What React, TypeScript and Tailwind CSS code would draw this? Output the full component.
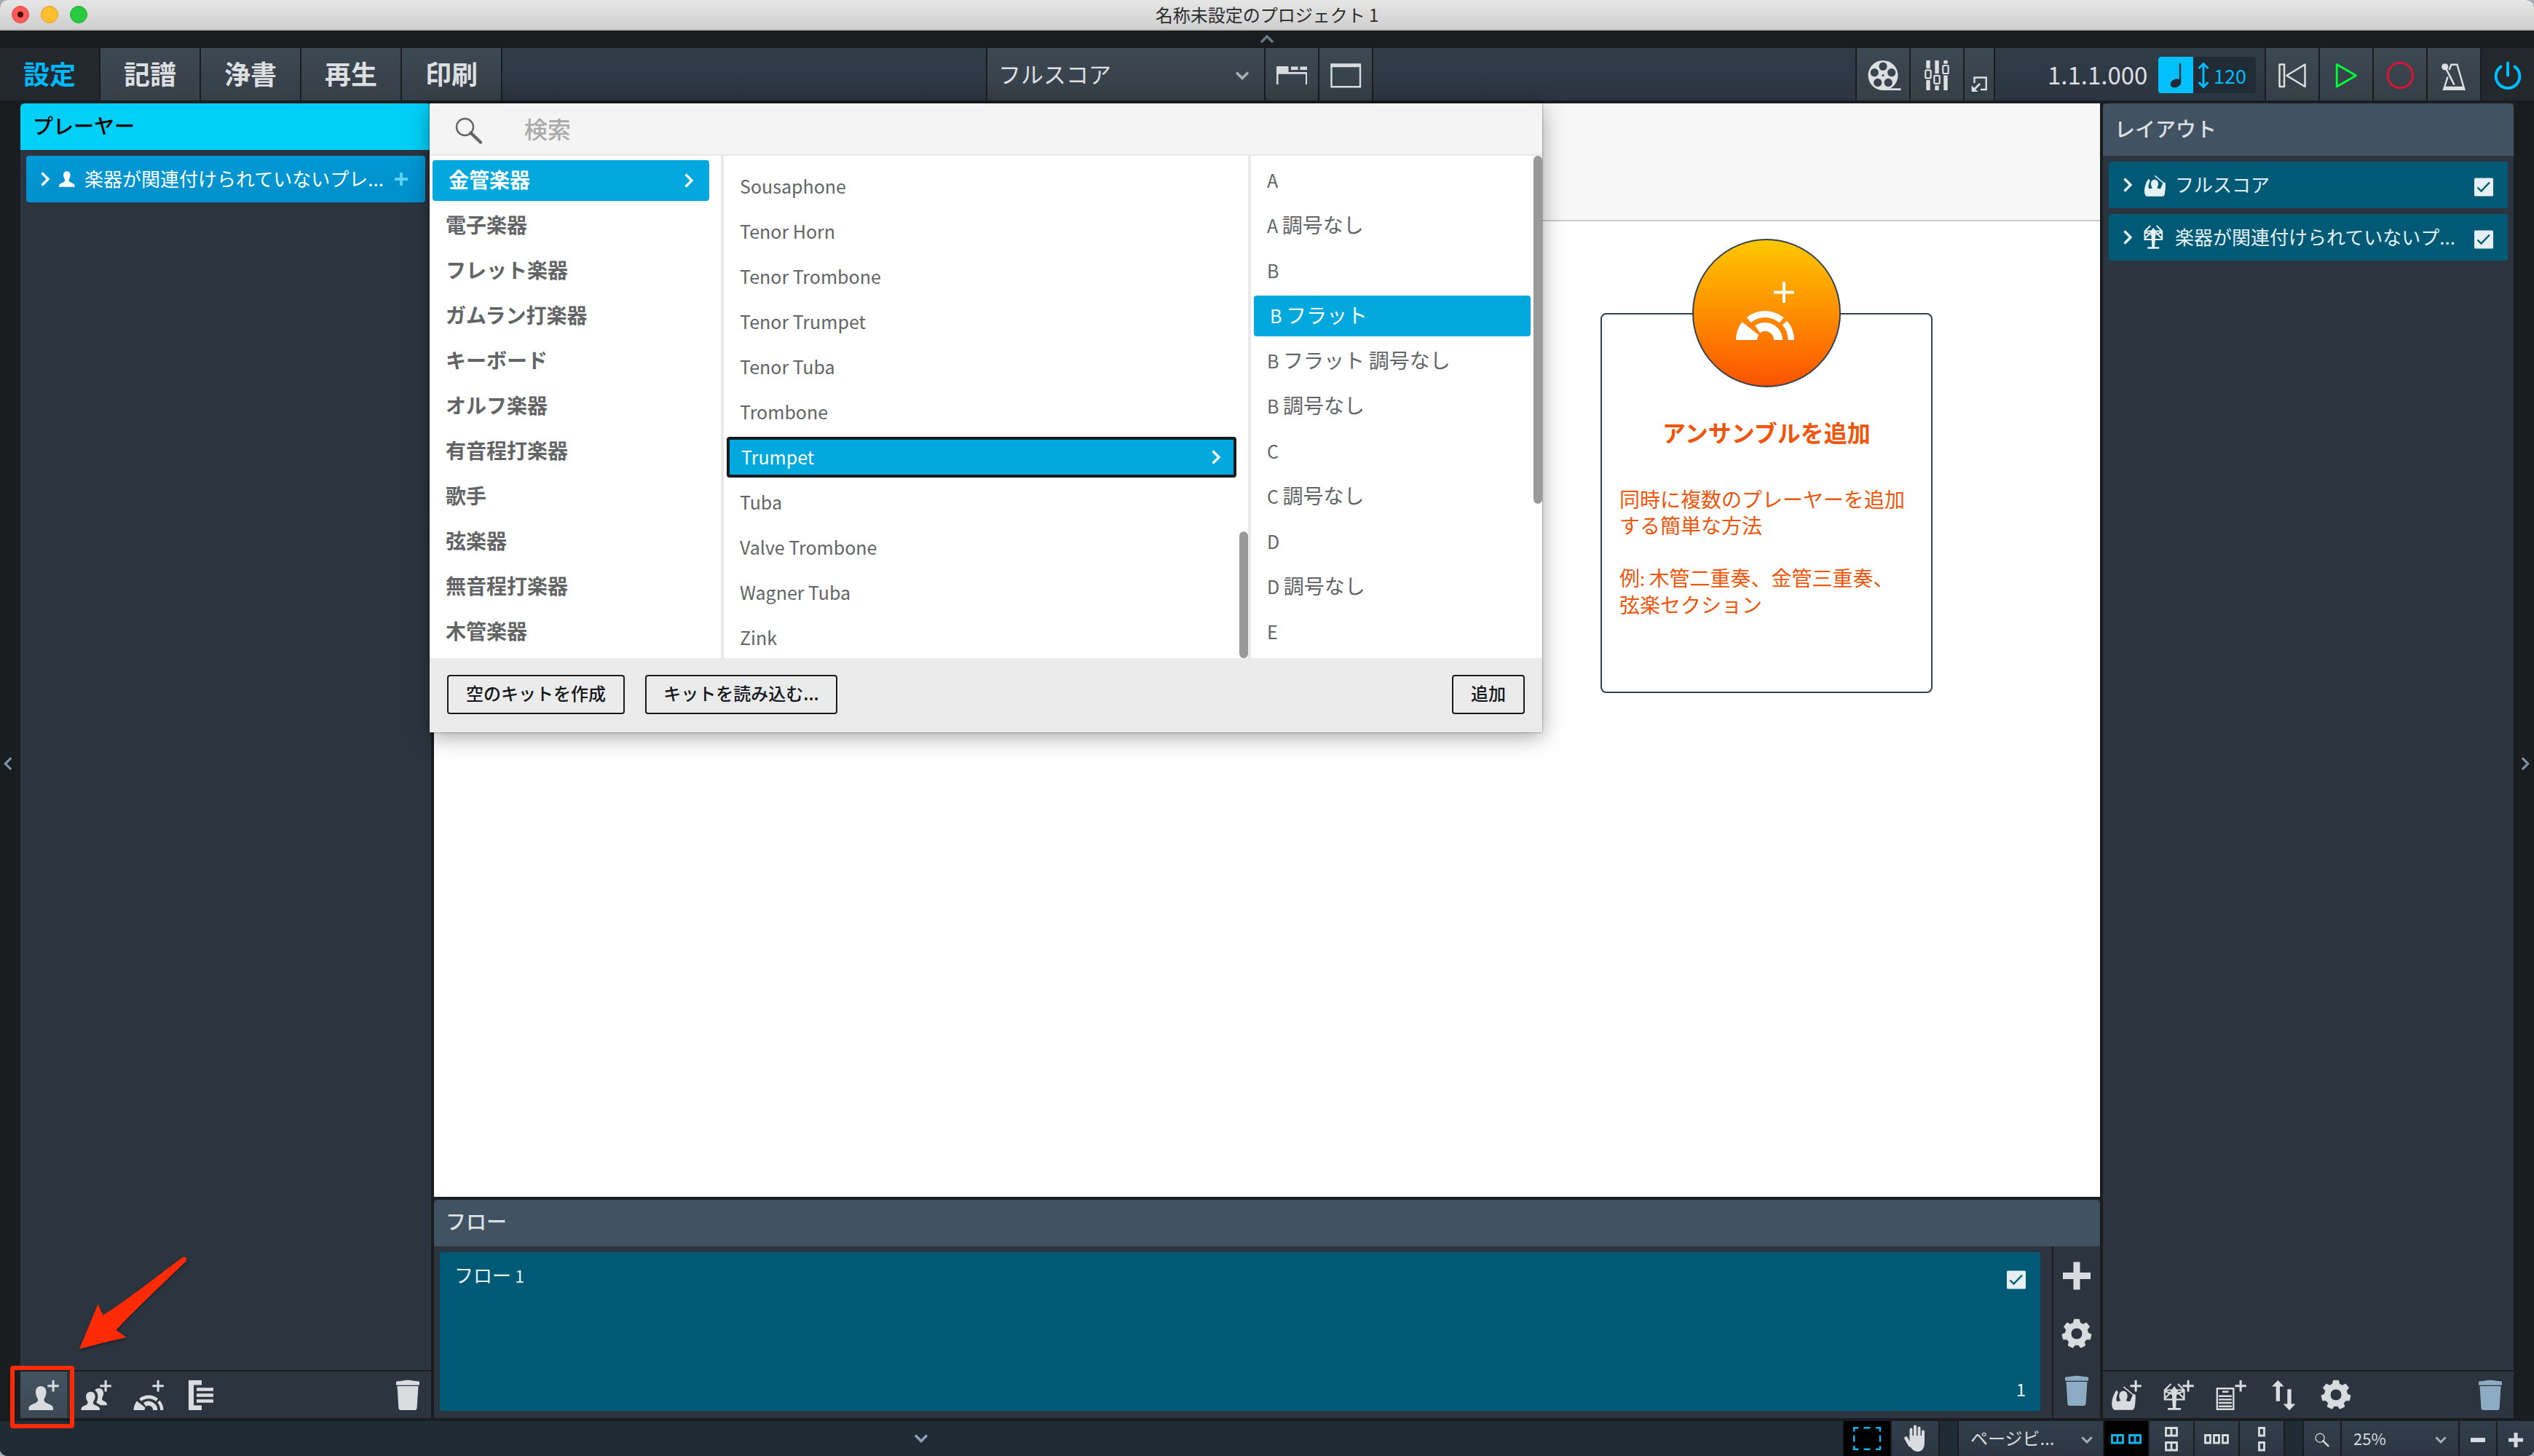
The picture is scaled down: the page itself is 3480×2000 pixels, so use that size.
import React, { useState } from 'react';
import { clsx } from 'clsx';

const CATEGORIES = [
  '金管楽器', '電子楽器', 'フレット楽器', 'ガムラン打楽器', 'キーボード', 'オルフ楽器',
  '有音程打楽器', '歌手', '弦楽器', '無音程打楽器', '木管楽器',
];

const INSTRUMENTS = [
  'Sousaphone', 'Tenor Horn', 'Tenor Trombone', 'Tenor Trumpet', 'Tenor Tuba', 'Trombone',
  'Trumpet', 'Tuba', 'Valve Trombone', 'Wagner Tuba', 'Zink',
];

const TUNINGS = [
  'A', 'A 調号なし', 'B', 'B フラット', 'B フラット 調号なし', 'B 調号なし',
  'C', 'C 調号なし', 'D', 'D 調号なし', 'E',
];

const MODES = ['設定', '記譜', '浄書', '再生', '印刷'];

/* ---------- geometry helpers ---------- */

const polar = (cx: number, cy: number, r: number, deg: number) => {
  const a = (deg * Math.PI) / 180;
  return `${(cx + r * Math.cos(a)).toFixed(2)} ${(cy - r * Math.sin(a)).toFixed(2)}`;
};

const sector = (cx: number, cy: number, r0: number, r1: number, a0: number, a1: number) =>
  `M${polar(cx, cy, r1, a0)}A${r1} ${r1} 0 0 0 ${polar(cx, cy, r1, a1)}L${polar(cx, cy, r0, a1)}A${r0} ${r0} 0 0 1 ${polar(cx, cy, r0, a0)}Z`;

const gearPath = (() => {
  const step = 360 / 7;
  let d = '';
  for (let i = 0; i < 7; i++) {
    const a = 90 + i * step;
    d += `${i ? 'L' : 'M'}${polar(32, 32, 15.5, a - 17)}L${polar(32, 32, 20, a - 10)}`;
    d += `L${polar(32, 32, 20, a + 10)}L${polar(32, 32, 15.5, a + 17)}`;
  }
  return d + 'ZM40 32a8 8 0 1 0 -16 0a8 8 0 1 0 16 0Z';
})();

/* ---------- icons ---------- */

interface IconProps {
  className?: string;
  children?: React.ReactNode;
}

// 64px toolbar glyphs
const Icon64 = ({ className, children }: IconProps) => (
  <svg viewBox="0 0 64 64" className={clsx('size-16 shrink-0', className)} fill="currentColor">
    {children}
  </svg>
);

// 72px transport glyphs
const Icon72 = ({ className, children }: IconProps) => (
  <svg viewBox="0 0 72 72" className={clsx('size-[72px] shrink-0', className)} fill="none" stroke="currentColor">
    {children}
  </svg>
);

const PlusMark = () => <path d="M43.6 12h3v6.2h6.2v3h-6.2v6.2h-3v-6.2h-6.2v-3h6.2z" />;

const PERSON =
  'M28 20c-4.6 0-7 3.600-7 8.200c0 4.200 1.600 7.400 3 9.400c.4 2.600-.6 4.200-3 5.400c-4.200 2-9.500 3.400-9.500 7.500v1.500q0 1 1 1h31.500q1 0 1-1v-1.500c0-4.100-5.300-5.500-9.500-7.500c-2.400-1.200-3.400-2.800-3-5.400c1.400-2 3-5.200 3-9.400c0-4.600-2.900-8.200-7.500-8.200z';

const AddPlayerIcon = () => (
  <Icon64>
    <path d={PERSON} />
    <PlusMark />
  </Icon64>
);

const AddGroupIcon = () => (
  <Icon64>
    <path d="M35.600 23c-2.400 0-4.300 1-5.200 2.800c2.800 1.900 4 5 4 8.700c0 3-.9 5.500-2 7.500c.5 2 3.600 2.400 5.600 4.300h8q1 0 1-1c0-3.300-3.400-4-5.600-5.500c-1.600-1.200-1.600-2.600-1-4.200c1-1.600 1.700-3.600 1.700-6.100c0-3.800-2.600-6.500-6.500-6.500z" />
    <path d="M24.500 27.700c-4 0-6.400 2.800-6.400 6.800c0 3 1 5.300 2.300 7c.4 2-.2 3.200-1.900 4.200c-2.800 1.500-7 2.500-7 5.600v.7q0 1 1 1h23.500q1 0 1-1v-.7c0-3.100-4.200-4.100-7-5.600c-1.700-1-2.300-2.200-1.900-4.200c1.300-1.700 2.600-4 2.600-7c0-4-2.200-6.800-6.200-6.800z" />
    <PlusMark />
  </Icon64>
);

const EnsembleArcs = ({ cx, cy, k }: { cx: number; cy: number; k: number }) => (
  <>
    <path d={sector(cx, cy, 11 * k, 40 * k, 142, 180)} />
    <path d={sector(cx, cy, 31 * k, 40 * k, 50, 129)} />
    <path d={sector(cx, cy, 31.5 * k, 40 * k, 0, 41)} />
    <path d={sector(cx, cy, 12 * k, 24 * k, 0, 125)} />
  </>
);

const AddEnsembleIcon = () => (
  <Icon64>
    <EnsembleArcs cx={32} cy={53} k={0.51} />
    <PlusMark />
  </Icon64>
);

const BracketListIcon = () => (
  <Icon64>
    <path d="M15 12h18v6.500h-11v28h11v6.500h-18zM26 22.200h23v4.600h-23zM26 30.200h23v4.600h-23zM26 38.200h23v4.600h-23z" />
  </Icon64>
);

const TrashIcon = ({ className }: { className?: string }) => (
  <Icon64 className={className}>
    <path d="M16 14.500q0-1 1-1.100l7-.6q8-2.200 16 0l7 .6q1 .1 1 1.100v3.200q0 1-1 1h-30q-1 0-1-1zM17.500 20h29l-1.900 30q-.2 3-3 3h-19.200q-2.800 0-3-3z" />
  </Icon64>
);

const GearIcon = () => (
  <Icon64>
    <path d={gearPath} fillRule="evenodd" stroke="currentColor" strokeWidth="1" strokeLinejoin="round" />
  </Icon64>
);

const Conductor = () => (
  <>
    <path d="M18.700 25.500l2.200 2.800l-2.600 8.400l.6 4.300c2 0 4.500-.4 5.400-1.600c-1.600-2-2-4-2-6c0-4 2.300-6.600 5.700-6.600s5.700 2.600 5.700 6.600c0 2-.4 4-2 6c.9 1.200 3.400 1.600 5.400 1.600l3.600-8.500l.3-1.500l3.600.5c.6 5-.2 12-1 17c-.5 2.800-2 4.200-3.300 4.200h-24c-1.500 0-3-1.700-3.600-4.200c-1.600-7 1.400-17 6-23z" />
    <path d="M28.300 20.800L43.500 33.500" stroke="currentColor" strokeWidth="1.600" fill="none" />
  </>
);

const MusicStand = () => (
  <>
    <path
      d="M12.800 25.500h26.700v12.800h-26.700zM21.500 17L12.800 25.500M31 17L39.500 25.500M12.800 37L26 24L39.500 37M13 27L26 32L39 27"
      fill="none"
      stroke="currentColor"
      strokeWidth="2.200"
    />
    <path d="M26 20l3.500 5l-1.300 25h6.800v2.800h-18v-2.800h6.800l-1.300-25z" />
  </>
);

const AddScoreIcon = () => <Icon64><Conductor /><PlusMark /></Icon64>;
const AddPartIcon = () => <Icon64><MusicStand /><PlusMark /></Icon64>;

const AddCustomIcon = () => (
  <Icon64>
    <path
      d="M12.800 23.200h22.500v28.600h-22.500zM20 27.800h8.500M15 33.700h18M15 38.400h18M15 43h18M15 47.700h18"
      fill="none"
      stroke="currentColor"
      strokeWidth="2.400"
    />
    <PlusMark />
  </Icon64>
);

const SortIcon = () => (
  <Icon64>
    <path d="M24.300 12l8.400 8.600h-5.700v20.200h-5.300v-20.200h-5.700zM40 53.200l-8.400-8.600h5.700v-20.300h5.400v20.300h5.700z" />
  </Icon64>
);

const Chevron = ({ className, dir = 'down' }: { className?: string; dir?: 'down' | 'right' | 'up' | 'left' }) => {
  const d = {
    down: 'M4 7.500L12 15.500L20 7.500',
    up: 'M4 16L12 8L20 16',
    right: 'M7.500 3.500L16 12L7.500 20.500',
    left: 'M15.500 3.500L7 12L15.500 20.500',
  }[dir];
  return (
    <svg viewBox="0 0 24 24" className={clsx('shrink-0', className)} fill="none" stroke="currentColor" strokeWidth="3.400">
      <path d={d} />
    </svg>
  );
};

const Magnifier = ({ className }: { className?: string }) => (
  <svg viewBox="0 0 38 38" className={clsx('shrink-0', className)} fill="none" stroke="currentColor">
    <circle cx="13.500" cy="13.500" r="11.500" strokeWidth="2.400" />
    <path d="M21.500 21.500L35 34.500" strokeWidth="4.400" strokeLinecap="round" />
  </svg>
);

const Checkbox = () => (
  <svg viewBox="0 0 26 26" className="size-[26px] shrink-0">
    <rect width="26" height="25" y=".5" rx="1.500" fill="#e6f0f4" />
    <path d="M4.500 13.500L9.500 18.500L21 6.500" fill="none" stroke="#005a75" strokeWidth="2.400" />
  </svg>
);

const FilmReelIcon = () => (
  <Icon72>
    <circle cx="36" cy="37.500" r="20.500" fill="currentColor" stroke="none" />
    <path d="M36 56.700H60.600" strokeWidth="2.800" />
    {[90, 162, 234, 306, 18].map((a) => {
      const [x, y] = polar(36, 37.5, 12.3, a).split(' ');
      return <circle key={a} cx={x} cy={y} r="5.600" fill="#39444e" stroke="none" />;
    })}
    <circle cx="36" cy="37.500" r="1.500" fill="#39444e" stroke="none" />
  </Icon72>
);

const MixerIcon = () => (
  <Icon72>
    <path d="M24 17v11M24 44v14M36 17v18M36 51.500v6.500M48 17v4.500M48 37.500v20.500" strokeWidth="5.400" />
    <rect x="20.300" y="30.300" width="7.400" height="11" rx="1.500" strokeWidth="2.200" />
    <rect x="32.300" y="37.800" width="7.400" height="11" rx="1.500" strokeWidth="2.200" />
    <rect x="44.300" y="24" width="7.400" height="11" rx="1.500" strokeWidth="2.200" />
  </Icon72>
);

const PopOutIcon = () => (
  <svg viewBox="0 0 40 72" className="h-[72px] w-10 shrink-0" fill="none" stroke="currentColor">
    <path d="M13.500 48V40.500H29.700V57H22" strokeWidth="2.400" />
    <path d="M21 49L13 57" strokeWidth="2.600" />
    <path d="M9.700 51.500V60H18.500Z" fill="currentColor" stroke="none" />
  </svg>
);

const TabsIcon = () => (
  <Icon72 className="text-[#d8dcdf]">
    <path d="M15 25.500q0-.5.500-.5h15q1 0 1 1v7h25.500v17h-2v-14.300h-37.500v14.300h-2.500zM35 25.500h9.500v4.500h-9.500zM47.500 25.500h9.500v4.500h-9.500z" fill="currentColor" stroke="none" />
  </Icon72>
);

const WindowIcon = () => (
  <Icon72 className="text-[#d8dcdf]">
    <path d="M16.500 22.500h39.500v30.700h-39.500z" strokeWidth="2.400" />
    <path d="M15.500 24h41.500" strokeWidth="4.600" />
  </Icon72>
);

const RewindIcon = () => (
  <Icon72>
    <path d="M18.500 22.500h6.500v30.500h-6.500zM28.300 37.700L53.500 22.500V53z" strokeWidth="2.500" strokeLinejoin="round" />
  </Icon72>
);

const PlayIcon = () => (
  <Icon72 className="text-[#00ff38]">
    <path d="M23.200 22.500V53L49.500 37.700z" strokeWidth="2.800" strokeLinejoin="round" />
  </Icon72>
);

const RecordIcon = () => (
  <Icon72 className="text-[#e6112e]">
    <circle cx="36.300" cy="37.500" r="17.200" strokeWidth="2.800" />
  </Icon72>
);

const MetronomeIcon = () => (
  <Icon72>
    <circle cx="23.700" cy="25.800" r="4.600" fill="currentColor" stroke="none" />
    <path d="M24 26L36.500 50.500" strokeWidth="2.600" />
    <path d="M29.500 30L32.500 22.700H40.500L49.500 54H23L27.500 39.500" strokeWidth="2.400" />
    <path d="M20.300 58L22 53.500H50.500L52 58z" fill="currentColor" stroke="none" />
  </Icon72>
);

const PowerIcon = () => (
  <Icon72 className="text-[#00bdff]">
    <path d="M26.500 25.500A16.300 16.300 0 1 0 45.500 25.500M36 20.500V37.500" strokeWidth="4" strokeLinecap="round" />
  </Icon72>
);

const HandIcon = () => (
  <svg viewBox="0 0 64 48" className="h-12 w-16" fill="none" stroke="#d8dcdf" strokeLinecap="round">
    <path d="M26.500 22V11.500M32 20V7.500M37.500 21V9.500M43 24V14.500" strokeWidth="4" />
    <path d="M19.500 23.500L25 33" strokeWidth="4.600" />
    <path d="M24.500 20H45V30C45 37 41.500 42 36 42C30 42 27 38 23 32L24.500 29z" fill="#d8dcdf" stroke="none" />
  </svg>
);

const MarqueeIcon = () => (
  <svg viewBox="0 0 64 48" className="h-12 w-16" fill="none" stroke="#12b4f0" strokeWidth="2.400">
    <path d="M14.200 14.500V9.200H20.500M44 9.200H50V14.500M50 34V38.700H44M20.500 38.700H14.200V34M27.500 9.200H36.500M27.500 38.700H36.500M14.200 19.500V28.500M50 19.500V28.500" />
  </svg>
);

// Page arrangement glyphs for the view switcher
const PageLayoutIcon = ({ kind }: { kind: 'spreadH' | 'spreadV' | 'singleH' | 'singleV' }) => {
  const d = {
    spreadH: 'M10.500 19.500h15v10.500h-15zM18 19.500v10.500M34.500 19.500h15v10.500h-15zM42 19.500v10.500',
    spreadV: 'M22.500 9.500h15v10.500h-15zM30 9.500v10.500M22.500 29.500h15v10.500h-15zM30 29.500v10.500',
    singleH: 'M14.500 19.500h7v10.500h-7zM26.500 19.500h7v10.500h-7zM38.500 19.500h7v10.500h-7z',
    singleV: 'M26.500 9.500h7v10.500h-7zM26.500 29.500h7v10.500h-7z',
  }[kind];
  return (
    <svg viewBox="0 0 60 48" className="h-12 w-[60px]" fill="none" stroke="currentColor" strokeWidth="2.800">
      <path d={d} />
    </svg>
  );
};

/* ---------- top ---------- */

const TitleBar = () => (
  <div className="flex h-[42px] items-center border-b-2 border-[#b4b4b4] bg-linear-to-b from-[#e6e6e6] to-[#cfcfcf]">
    <div className="flex w-[120px] gap-4 pl-4">
      <span className="flex size-6 items-center justify-center rounded-full border border-[#e2463f] bg-[#fc5b57]">
        <span className="size-2 rounded-full bg-[#4d0000]" />
      </span>
      <span className="size-6 rounded-full border border-[#e0a028] bg-[#fdbe2f]" />
      <span className="size-6 rounded-full border border-[#1dad2c] bg-[#28cb40]" />
    </div>
    <div className="flex-1 pr-[120px] text-center text-2xl leading-10 text-[#2d2d2d]">名称未設定のプロジェクト 1</div>
  </div>
);

const Toolbar = () => {
  const [mode, setMode] = useState(MODES[0]);

  return (
    <div className="flex h-[72px] bg-linear-to-b from-[#2f3d49] to-[#2b3540] text-[#dcdee0]">
      {MODES.map((m) => (
        <button
          key={m}
          onClick={() => setMode(m)}
          className={clsx(
            'w-[138px] border-r-2 border-[#191d20] pb-[5px] text-4xl font-bold leading-none',
            m === mode ? 'bg-[#22282c] text-[#00b8fb]' : 'bg-linear-to-b from-[#3c4853] to-[#353f48]',
          )}
        >
          {m}
        </button>
      ))}
      <div className="ml-[664px] flex border-l-2 border-[#191d20] bg-linear-to-b from-[#3c4853] to-[#353f48]">
        <div className="flex w-[382px] items-center justify-between border-r-2 border-[#191d20] pl-[15px] pr-[18px]">
          <span className="pb-1 text-[31px] leading-none">フルスコア</span>
          <Chevron className="mt-1 size-6 text-[#a9b0b6]" />
        </div>
        <div className="border-r-2 border-[#191d20]"><TabsIcon /></div>
        <div className="border-r-2 border-[#191d20]"><WindowIcon /></div>
      </div>
      <div className="ml-auto flex border-l-2 border-[#191d20] bg-linear-to-b from-[#3c4853] to-[#353f48]">
        <div className="border-r-2 border-[#191d20]"><FilmReelIcon /></div>
        <div className="border-r-2 border-[#191d20]"><MixerIcon /></div>
        <div className="border-r-2 border-[#191d20]"><PopOutIcon /></div>
      </div>
      <div className="flex w-[370px] items-center pl-[72px]">
        <span className="w-[152px] pt-px text-[33px] leading-none">1.1.1.000</span>
        <div className="mt-0.5 flex h-[50px] w-[134px] items-center overflow-hidden rounded bg-[#1f2b35] text-[#00bdff]">
          <svg viewBox="0 0 48 50" className="h-[50px] w-12 bg-[#00c0ff]">
            <ellipse cx="24" cy="36.300" rx="7.800" ry="5.600" transform="rotate(-24 24 36.300)" fill="#1f2b35" />
            <path d="M30 9V35" stroke="#1f2b35" strokeWidth="2.400" />
          </svg>
          <svg viewBox="0 0 28 50" className="h-[50px] w-7" fill="none" stroke="currentColor" strokeWidth="3">
            <path d="M14 10V41M7.500 16L14 9.500L20.500 16M7.500 35L14 41.500L20.500 35" />
          </svg>
          <span className="text-[27px] leading-none">120</span>
        </div>
      </div>
      <div className="flex border-l-2 border-[#191d20] bg-linear-to-b from-[#3c4853] to-[#353f48]">
        <div className="border-r-2 border-[#191d20]"><RewindIcon /></div>
        <div className="border-r-2 border-[#191d20]"><PlayIcon /></div>
        <div className="border-r-2 border-[#191d20]"><RecordIcon /></div>
        <div className="border-r-2 border-[#191d20]"><MetronomeIcon /></div>
        <div className="bg-[#22282c]"><PowerIcon /></div>
      </div>
    </div>
  );
};

/* ---------- panels ---------- */

const PlayersPanel = () => (
  <div className="flex w-[564px] flex-col bg-[#2c353f]">
    <div className="h-16 rounded-t-md bg-[#00cff8] pl-[17px] text-[28px] font-medium leading-[60px] text-black">プレーヤー</div>
    <div className="mx-2 mt-2 flex h-16 items-center rounded bg-linear-to-b from-[#0099d6] to-[#008fca] text-white">
      <Chevron dir="right" className="ml-3.5 size-6" />
      <svg viewBox="10 18 37 37" className="ml-1.5 mr-3 size-6" fill="currentColor">
        <path d={PERSON} />
      </svg>
      <span className="w-[425px] pb-0.5 text-[26px] leading-none">楽器が関連付けられていないプレ...</span>
      <svg viewBox="0 0 20 20" className="size-5" stroke="#5fd0f5" strokeWidth="4">
        <path d="M10 1V19M1 10H19" />
      </svg>
    </div>
    <div className="mt-auto flex h-[66px] gap-2 border-t-2 border-[#191d20] text-[#d9dcde]">
      <div className="bg-linear-to-b from-[#43535f] to-[#3c4955]"><AddPlayerIcon /></div>
      <AddGroupIcon />
      <AddEnsembleIcon />
      <BracketListIcon />
      <TrashIcon className="ml-auto" />
    </div>
  </div>
);

const LayoutRow = ({ label, children }: { label: string; children: React.ReactNode }) => (
  <div className="flex h-16 items-center rounded bg-[#005a75] text-[#e6f2f6]">
    <Chevron dir="right" className="ml-3.5 size-6" />
    <svg viewBox="10 17 36 36" className="ml-[9px] mr-[12px] size-8 overflow-visible" fill="currentColor">
      {children}
    </svg>
    <span className="flex-1 pb-0.5 text-[26px] leading-none">{label}</span>
    <span className="mr-5 mt-1.5"><Checkbox /></span>
  </div>
);

const LayoutsPanel = () => (
  <div className="ml-1 flex w-[564px] flex-col bg-[#2c353f]">
    <div className="h-[72px] rounded-t-md bg-[#415362] pl-4 text-[28px] font-medium leading-[68px] text-[#dcdee0]">レイアウト</div>
    <div className="flex flex-col gap-2 p-2">
      <LayoutRow label="フルスコア"><Conductor /></LayoutRow>
      <LayoutRow label="楽器が関連付けられていないプ..."><MusicStand /></LayoutRow>
    </div>
    <div className="mt-auto flex h-[66px] gap-2 border-t-2 border-[#191d20] text-[#d9dcde]">
      <AddScoreIcon />
      <AddPartIcon />
      <AddCustomIcon />
      <SortIcon />
      <GearIcon />
      <TrashIcon className="ml-auto text-[#8dabc3]" />
    </div>
  </div>
);

const FlowsPanel = () => (
  <div className="mt-1 flex h-[300px] flex-col bg-[#2c353f]">
    <div className="h-16 rounded-t-md bg-[#415362] pl-4 text-[28px] font-medium leading-[59px] text-[#dcdee0]">フロー</div>
    <div className="flex flex-1">
      <div className="mx-2 mb-2.5 mt-2 flex w-[2198px] flex-col justify-between rounded bg-[#005a75] pl-5 pr-5 text-[26px] leading-none text-[#e6f2f6]">
        <div className="flex items-start justify-between">
          <span className="pt-[18px]">フロー<span className="text-[23px]"> 1</span></span>
          <span className="pt-[25px]"><Checkbox /></span>
        </div>
        <span className="self-end pb-[18px] text-[24px]">1</span>
      </div>
      <div className="ml-2 flex w-[66px] flex-col items-center border-l-2 border-[#191d20] pt-2 text-[#d9dcde]">
        <Icon64><path d="M27.500 13.500h9v14.500h14.500v9h-14.500v14.500h-9v-14.500h-14.500v-9h14.500z" /></Icon64>
        <div className="mt-4"><GearIcon /></div>
        <TrashIcon className="mt-3.5 text-[#8dabc3]" />
      </div>
    </div>
  </div>
);

const EnsembleCard = () => (
  <div className="absolute left-[1602px] top-[288px] h-[522px] w-[456px] rounded-lg border-2 border-[#34424f] bg-white text-[#f0560b]">
    <svg viewBox="0 0 204 204" className="absolute left-1/2 -top-[104px] size-[204px] -translate-x-1/2">
      <defs>
        <linearGradient id="ensemble" x1="0" y1="0" x2="0" y2="1">
          <stop offset="0" stopColor="#ffc800" />
          <stop offset=".5" stopColor="#ff8f00" />
          <stop offset="1" stopColor="#fb5200" />
        </linearGradient>
      </defs>
      <circle cx="102" cy="102" r="101" fill="url(#ensemble)" stroke="#34424f" strokeWidth="2" />
      <g fill="#fff">
        <EnsembleArcs cx={100} cy={139} k={1} />
        <path d="M124 59h4v12.500h12v4h-12v12.500h-4v-12.500h-12v-4h12z" />
      </g>
    </svg>
    <div className="mt-[141px] text-center text-[32px] font-bold leading-10">アンサンブルを追加</div>
    <div className="mt-[54px] pl-6 text-[28px] leading-9">
      <p>同時に複数のプレーヤーを追加<br />する簡単な方法</p>
      <p className="mt-9"><span>例</span><span className="text-[25px]">: </span>木管二重奏、金管三重奏、<br />弦楽セクション</p>
    </div>
  </div>
);

/* ---------- instrument picker ---------- */

interface PickRowProps {
  label: string;
  selected: boolean;
  bold?: boolean;
  focused?: boolean;
  arrow?: boolean;
  onClick: () => void;
}

// Latin runs are set a little smaller than the kana and kanji beside them
const MixedText = ({ text }: { text: string }) => (
  <>
    {text.split(/([A-Za-z ]+)/).map((part, i) =>
      i % 2 ? <span key={i} className="text-[25px]">{part}</span> : part,
    )}
  </>
);

const PickRow = ({ label, selected, bold, focused, arrow, onClick }: PickRowProps) => (
  <button
    onClick={onClick}
    className={clsx(
      'flex h-14 shrink-0 items-center justify-between rounded text-left text-[28px] leading-none',
      bold ? 'font-bold' : 'font-normal',
      selected ? 'bg-[#00a8de] text-white' : 'pl-[18px] text-[#626466]',
      selected && !focused && 'pl-[22px] pr-4',
      focused && 'border-4 border-[#171b1e] pl-4 pr-3',
    )}
  >
    <span className="whitespace-pre pb-1"><MixedText text={label} /></span>
    {arrow && <Chevron dir="right" className="size-6" />}
  </button>
);

const InstrumentPicker = () => {
  const [category, setCategory] = useState('金管楽器');
  const [instrument, setInstrument] = useState('Trumpet');
  const [tuning, setTuning] = useState('B フラット');

  return (
    <div className="absolute -left-1.5 top-0 flex h-[864px] w-[1528px] flex-col bg-white shadow-[0_6px_28px_rgba(0,0,0,0.35),0_0_2px_rgba(0,0,0,0.6)]">
      <div className="flex h-[72px] items-center border-b-2 border-[#e8e8e8] bg-[#f4f4f4]">
        <Magnifier className="ml-[35px] mt-1.5 size-[38px] text-[#666]" />
        <span className="ml-[57px] pb-[3px] text-[32px] font-medium leading-none text-[#aaa]">検索</span>
      </div>
      <div className="flex h-[690px]">
        <div className="flex w-[404px] flex-col gap-1.5 overflow-hidden border-r-4 border-[#e9e9e9] pl-1 pr-4 pt-1.5">
          {CATEGORIES.map((c) => (
            <PickRow key={c} label={c} bold selected={c === category} arrow={c === category} onClick={() => setCategory(c)} />
          ))}
        </div>
        <div className="flex w-[724px] border-r-4 border-[#e9e9e9]">
          <div className="flex h-[690px] w-[708px] flex-col gap-1.5 overflow-hidden pl-1 pr-1 pt-3.5">
            {INSTRUMENTS.map((i) => (
              <PickRow
                key={i}
                label={i}
                selected={i === instrument}
                focused={i === instrument}
                arrow={i === instrument}
                onClick={() => setInstrument(i)}
              />
            ))}
          </div>
          <div className="h-[174px] w-3 self-end rounded-md bg-[#999]" />
        </div>
        <div className="flex flex-1">
          <div className="flex h-[690px] w-[388px] flex-col gap-1.5 overflow-hidden px-1 pt-1.5">
            {TUNINGS.map((t) => (
              <PickRow key={t} label={t} selected={t === tuning} onClick={() => setTuning(t)} />
            ))}
          </div>
          <div className="h-[478px] w-3 rounded-md bg-[#999]" />
        </div>
      </div>
      <div className="flex flex-1 items-center bg-[#ebebeb] px-6 pb-0.5 text-2xl font-medium leading-none text-[#14181b]">
        <button className="h-[54px] w-[244px] rounded border-2 border-[#1a1d20] pb-1">空のキットを作成</button>
        <button className="ml-7 h-[54px] w-[264px] rounded border-2 border-[#1a1d20] pb-1">キットを読み込む...</button>
        <button className="ml-auto h-[54px] w-[100px] rounded border-2 border-[#1a1d20] pb-1">追加</button>
      </div>
    </div>
  );
};

/* ---------- bottom ---------- */

const StatusBar = () => (
  <div className="flex h-12 bg-[#1f2c36] text-[#d8dcdf]">
    <div className="flex w-[2530px] items-center justify-center">
      <Chevron className="size-6 text-[#8aa4bb]" />
    </div>
    <div className="flex border-x-2 border-[#191d20] bg-linear-to-b from-[#323f4a] to-[#2b3641]">
      <div className="border-r-2 border-[#191d20] bg-black"><MarqueeIcon /></div>
      <HandIcon />
    </div>
    <div className="ml-6 flex border-x-2 border-[#191d20] bg-linear-to-b from-[#323f4a] to-[#2b3641]">
      <div className="flex w-[200px] items-center justify-between border-r-2 border-[#191d20] pl-4 pr-3">
        <span className="pb-0.5 text-2xl leading-none">ページビ...</span>
        <Chevron className="mt-1 size-5 text-[#a9b0b6]" />
      </div>
      <div className="border-r-2 border-[#191d20] bg-black text-[#12b4f0]"><PageLayoutIcon kind="spreadH" /></div>
      <div className="border-r-2 border-[#191d20]"><PageLayoutIcon kind="spreadV" /></div>
      <div className="border-r-2 border-[#191d20]"><PageLayoutIcon kind="singleH" /></div>
      <PageLayoutIcon kind="singleV" />
    </div>
    <div className="ml-6 flex flex-1 border-l-2 border-[#191d20] bg-linear-to-b from-[#323f4a] to-[#2b3641]">
      <div className="flex w-[52px] items-center justify-center border-r-2 border-[#191d20]">
        <Magnifier className="mt-1 size-5" />
      </div>
      <div className="flex w-[162px] items-center justify-between border-r-2 border-[#191d20] pl-4 pr-3.5">
        <span className="pb-0.5 text-[22px] leading-none">25%</span>
        <Chevron className="mt-1 size-5 text-[#a9b0b6]" />
      </div>
      <div className="flex w-[52px] items-center justify-center border-r-2 border-[#191d20]">
        <span className="mt-1 h-1.5 w-5 bg-[#d8dcdf]" />
      </div>
      <div className="flex flex-1 items-center justify-center">
        <svg viewBox="0 0 20 20" className="mt-1 size-5" stroke="currentColor" strokeWidth="5"><path d="M10 0V20M0 10H20" /></svg>
      </div>
    </div>
  </div>
);

export default function App() {
  return (
    <div className="relative h-[2000px] w-[3480px] overflow-hidden bg-[#a9adb5] font-['Noto_Sans_CJK_JP',sans-serif]">
      <div className="flex h-full flex-col overflow-hidden rounded-[10px] bg-[#191d20]">
        <TitleBar />
        <div className="flex h-6 shrink-0 items-center justify-center">
          <Chevron dir="up" className="size-6 text-[#66788a]" />
        </div>
        <Toolbar />
        <div className="my-1 flex h-[1806px]">
          <div className="flex w-7 items-center justify-center">
            <Chevron dir="left" className="mr-1 mt-2 size-[22px] text-[#7d93a6]" />
          </div>
          <PlayersPanel />
          <div className="relative ml-1 flex w-[2288px] flex-col">
            <div className="relative flex-1 bg-white">
              <div className="h-[162px] border-b-2 border-[#c6cbd0] bg-[#f7f7f7]" />
              <EnsembleCard />
            </div>
            <InstrumentPicker />
            <FlowsPanel />
          </div>
          <LayoutsPanel />
          <div className="flex w-7 items-center justify-center">
            <Chevron dir="right" className="ml-1 mt-2 size-[22px] text-[#7d93a6]" />
          </div>
        </div>
        <StatusBar />
      </div>

      {/* callout on the add-player button */}
      <div className="absolute left-3.5 top-[1876px] h-[86px] w-[88px] rounded-sm border-[6px] border-[#ff2b06]" />
      <svg viewBox="0 0 160 140" className="absolute left-[102px] top-[1720px] h-[140px] w-40 drop-shadow-[0_2px_2px_rgba(0,0,0,0.4)]">
        <path d="M7 133L32.500 71.500L39.500 86.500C75 64 115 32 149.500 6.500Q156 7 153.500 12.500C120 45 82 80 57.500 107L71.500 117Q40 124 7 133Z" fill="#ff2b06" />
      </svg>
    </div>
  );
}
